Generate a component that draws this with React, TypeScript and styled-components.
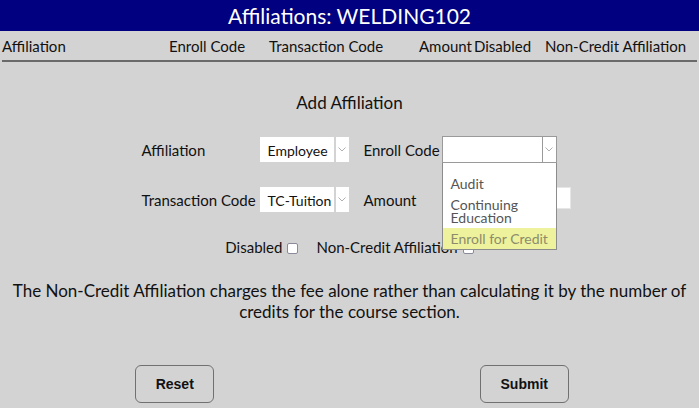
import React from "react";
import styled, { createGlobalStyle } from "styled-components";

const GlobalStyle = createGlobalStyle`
  html, body {
    margin: 0;
    padding: 0;
    background: #d3d3d3;
  }
  body {
    font-family: Lato, "Open Sans", sans-serif;
    color: #111;
  }
`;

const COLUMNS = ["Affiliation", "Enroll Code", "Transaction Code", "Amount", "Disabled", "Non-Credit Affiliation"];
const ENROLL_OPTIONS = ["Audit", "Continuing Education", "Enroll for Credit"];

const Chevron = () => (
  <svg width="8" height="5" viewBox="0 0 8 5">
    <polyline points="0.5,0.5 4,4 7.5,0.5" fill="none" stroke="#b0b0b0" strokeWidth="1" />
  </svg>
);

const App: React.FC = () => {
  return (
    <Page>
      <GlobalStyle />
      <TitleBar>Affiliations: WELDING102</TitleBar>
      <ColumnHeader>
        {COLUMNS.map((c) => (
          <span key={c}>{c}</span>
        ))}
      </ColumnHeader>

      <AddTitle>Add Affiliation</AddTitle>

      <FormGrid>
        <Label>Affiliation</Label>
        <Select widthsize="89px">
          <SelectValue>Employee</SelectValue>
          <ArrowBox><Chevron /></ArrowBox>
        </Select>
        <Label>Enroll Code</Label>
        <SelectWrap>
          <Select widthsize="115px" open>
            <SelectValue />
            <ArrowBox open><Chevron /></ArrowBox>
          </Select>
          <OptionList>
            {ENROLL_OPTIONS.map((o, i) => (
              <Option key={o} active={i === ENROLL_OPTIONS.length - 1}>{o}</Option>
            ))}
          </OptionList>
        </SelectWrap>

        <Label>Transaction Code</Label>
        <Select widthsize="89px">
          <SelectValue>TC-Tuition</SelectValue>
          <ArrowBox><Chevron /></ArrowBox>
        </Select>
        <Label>Amount</Label>
        <AmountInput />
      </FormGrid>

      <CheckRow>
        <CheckLabel>Disabled</CheckLabel>
        <Check type="checkbox" />
        <CheckLabel className="gap">Non-Credit Affiliation</CheckLabel>
        <Check type="checkbox" />
      </CheckRow>

      <Note>
        The Non-Credit Affiliation charges the fee alone rather than calculating it by the number of credits for
        the course section.
      </Note>

      <ButtonRow>
        <ActionButton widthsize="79px">Reset</ActionButton>
        <ActionButton widthsize="89px">Submit</ActionButton>
      </ButtonRow>
    </Page>
  );
};

const Page = styled.div`
  width: 699px;
  height: 408px;
  overflow: hidden;
  display: flex;
  flex-direction: column;
`;

const TitleBar = styled.div`
  height: 31px;
  line-height: 31px;
  background: #000080;
  color: #fff;
  text-align: center;
  font-size: 21px;
`;

const ColumnHeader = styled.div`
  display: grid;
  grid-template-columns: 167px 100px 150px 55px 71px 1fr;
  align-items: center;
  height: 29px;
  margin: 0 2px;
  border-bottom: 2px solid #6a6a6a;
  font-size: 15px;
  white-space: nowrap;
`;

const AddTitle = styled.div`
  margin-top: 30px;
  text-align: center;
  font-size: 17px;
  line-height: 22px;
`;

const FormGrid = styled.div`
  display: grid;
  grid-template-columns: 118px 104px 78px 130px;
  grid-auto-rows: 25px;
  row-gap: 25px;
  justify-content: center;
  padding-left: 14px;
  margin-top: 23px;
`;

const Label = styled.div`
  font-size: 15px;
  display: flex;
  align-items: center;
  white-space: nowrap;
`;

const SelectWrap = styled.div`
  position: relative;
  z-index: 2;
`;

const Select = styled.div<{ widthsize: string; open?: boolean }>`
  box-sizing: border-box;
  width: ${(p) => p.widthsize};
  height: ${(p) => (p.open ? "27px" : "25px")};
  margin-top: ${(p) => (p.open ? "-1px" : "0")};
  display: flex;
  gap: ${(p) => (p.open ? "0" : "2px")};
  background: ${(p) => (p.open ? "#fff" : "transparent")};
  border: ${(p) => (p.open ? "1px solid #9a9a9a" : "none")};
`;

const SelectValue = styled.div`
  flex: 1;
  background: #fff;
  font-size: 14px;
  padding-left: 8px;
  display: flex;
  align-items: center;
  padding-top: 2px;
  white-space: nowrap;
`;

const ArrowBox = styled.div<{ open?: boolean }>`
  width: 13px;
  background: #fff;
  display: flex;
  align-items: center;
  justify-content: center;
  border-left: ${(p) => (p.open ? "1px solid #9a9a9a" : "none")};
`;

const OptionList = styled.div`
  position: absolute;
  top: 26px;
  left: 0;
  box-sizing: border-box;
  width: 115px;
  padding-top: 10px;
  background: #fff;
  border: 1px solid #8c8c8c;
  border-top: none;
`;

const Option = styled.div<{ active?: boolean }>`
  padding: 4px 8px;
  font-size: 14px;
  line-height: 13px;
  color: ${(p) => (p.active ? "#8c8c6c" : "#555")};
  background: ${(p) => (p.active ? "#eef29c" : "transparent")};
  white-space: ${(p) => (p.active ? "nowrap" : "normal")};
`;

const AmountInput = styled.div`
  box-sizing: border-box;
  width: 129px;
  height: 22px;
  background: #fff;
  border: 1px solid #e6e6e6;
`;

const CheckRow = styled.div`
  display: flex;
  align-items: center;
  justify-content: center;
  height: 22px;
  margin-top: 24px;
`;

const CheckLabel = styled.span`
  font-size: 15px;
  &.gap {
    margin-left: 18px;
  }
`;

const Check = styled.input`
  appearance: none;
  box-sizing: border-box;
  width: 11px;
  height: 11px;
  margin: 2px 0 0 5px;
  background: #fff;
  border: 1px solid #8a8a9a;
  border-radius: 2px;
`;

const Note = styled.p`
  margin: 22px 6px 0;
  text-align: center;
  font-size: 17px;
  line-height: 21px;
`;

const ButtonRow = styled.div`
  display: grid;
  grid-template-columns: 1fr 1fr;
  justify-items: center;
  margin-top: 43px;
`;

const ActionButton = styled.button<{ widthsize: string }>`
  width: ${(p) => p.widthsize};
  height: 38px;
  background: transparent;
  border: 1px solid #707070;
  border-radius: 6px;
  font-family: "Liberation Sans", Arial, sans-serif;
  font-weight: bold;
  font-size: 14px;
  color: #111;
`;

export default App;
